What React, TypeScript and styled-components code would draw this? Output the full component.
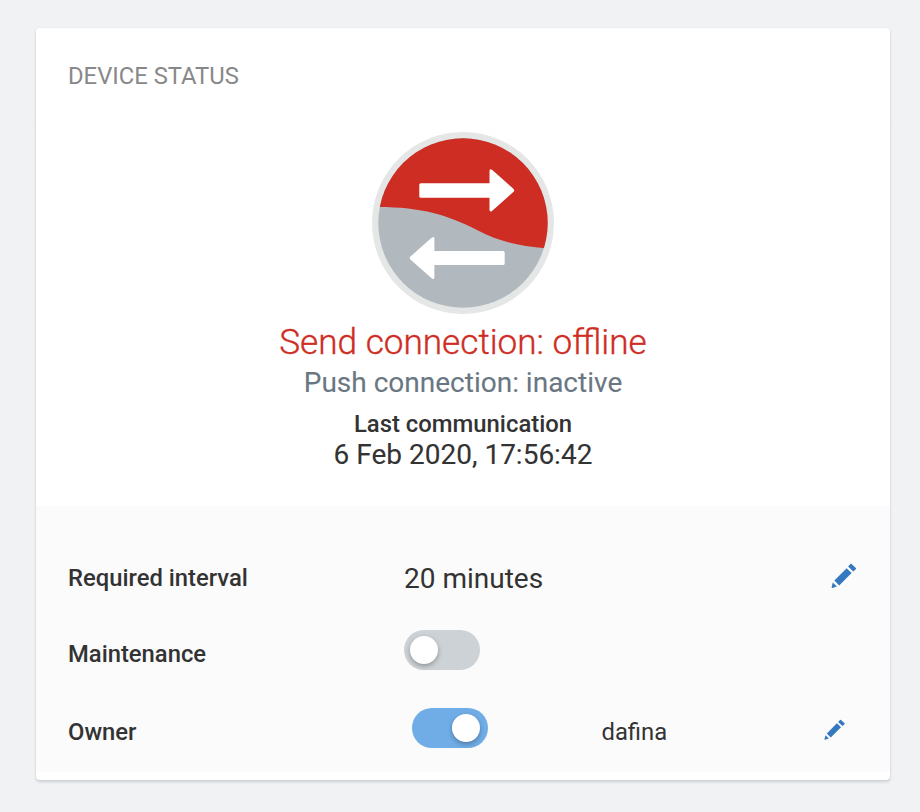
import React from "react";
import styled, { createGlobalStyle } from "styled-components";

const GlobalStyle = createGlobalStyle`
  * { box-sizing: border-box; }
  body {
    margin: 0;
    background: #f0f2f4;
    color: #333;
    font-family: Roboto, "Liberation Sans", sans-serif;
  }
`;

const Page = styled.main`
  height: 812px;
  padding: 28px 30px 32px 36px;
`;

const Card = styled.section`
  height: 752px;
  background: #fff;
  border-radius: 4px;
  box-shadow: 0 2px 3px rgba(40, 50, 60, 0.17), 0 0 2px rgba(40, 50, 60, 0.07);
`;

const CardHeader = styled.header`
  height: 104px;
  display: flex;
  flex-direction: column;
  justify-content: space-between;
  padding-top: 32px;
`;

const Title = styled.h1`
  margin: 0 32px;
  font-size: 23.8px;
  font-weight: 400;
  line-height: 32px;
  color: #888;
`;

const HeaderEdge = styled.div`
  height: 17px;
  background: #fff;
  box-shadow: 0 0 6px -2px rgba(40, 50, 60, 0.035);
`;

const Summary = styled.div`
  height: 374px;
  display: flex;
  flex-direction: column;
  align-items: center;
`;

const StatusIcon = styled.svg`
  display: block;
  flex: none;
  width: 182px;
  height: 182px;
`;

const Line = styled.div<{ $size: number; $height: number; $weight?: number; $color?: string; $top?: number; $stroke?: number }>`
  margin-top: ${(p) => p.$top ?? 0}px;
  font-size: ${(p) => p.$size}px;
  line-height: ${(p) => p.$height}px;
  font-weight: ${(p) => p.$weight ?? 400};
  color: ${(p) => p.$color ?? "#333"};
  -webkit-text-stroke: ${(p) => p.$stroke ?? 0}px currentColor;
  white-space: nowrap;
`;

const Settings = styled.div`
  height: 266px;
  padding: 34px 32px 0;
  background: #fbfbfb;
`;

const Row = styled.div<{ $height: number }>`
  display: grid;
  grid-template-columns: 336px 197.5px 1fr auto;
  align-items: center;
  height: ${(p) => p.$height}px;
`;

const Label = styled.span`
  font-size: 23.8px;
  line-height: 32px;
  font-weight: 500;
`;

const Value = styled.span<{ $size: number; $top?: number }>`
  padding-top: ${(p) => p.$top ?? 0}px;
  font-size: ${(p) => p.$size}px;
  line-height: 32px;
  white-space: nowrap;
`;

const Track = styled.button<{ $on?: boolean }>`
  display: flex;
  align-items: center;
  justify-content: ${(p) => (p.$on ? "flex-end" : "flex-start")};
  width: 76px;
  height: 40px;
  margin: 0 0 8px ${(p) => (p.$on ? 8 : 0)}px;
  padding: 0 ${(p) => (p.$on ? 8 : 6)}px;
  border: 0;
  border-radius: 20px;
  background: ${(p) => (p.$on ? "#70ade7" : "#cdd2d6")};
`;

const Thumb = styled.span`
  width: 28px;
  height: 28px;
  border-radius: 50%;
  background: #fff;
  box-shadow: 0 2px 5px rgba(0, 0, 0, 0.3);
`;

const EditButton = styled.button<{ $inset: number }>`
  display: block;
  grid-column: 4;
  margin: 0 ${(p) => p.$inset}px 4px 0;
  padding: 0;
  border: 0;
  background: none;
  color: #3478bf;
`;

const PencilSvg = styled.svg`
  display: block;
`;

function Pencil({ size }: { size: number }) {
  return (
    <PencilSvg width={size} height={size} viewBox="0 0 26 26" fill="currentColor">
      <path d="M3.4 17.5 15.6 5.2 20.6 10.1 8.2 22.4Z" />
      <path d="M17.1 3.6 19.4 1.1Q20 .5 20.6 1.1L24.8 5.1Q25.4 5.7 24.8 6.3L22.3 8.5Z" />
      <path d="M1.8 19.6 5.9 23.6 1.3 25Q.5 25.1 .6 24.3Z" />
    </PencilSvg>
  );
}

function ConnectionIcon() {
  return (
    <StatusIcon viewBox="372 132 182 182" aria-hidden="true">
      <defs>
        <clipPath id="disc">
          <circle cx="463" cy="223" r="84.7" />
        </clipPath>
      </defs>
      <circle cx="463" cy="223" r="91" fill="#e4e7e6" />
      <g clipPath="url(#disc)">
        <path d="M372 132H554V314H372Z" fill="#b1b8be" />
        <path d="M372 132H554V248.2H546C518 246 498 241 477 230C447 214.5 420 206.3 372 207Z" fill="#ce2d24" />
      </g>
      <g fill="#fff">
        <path d="M420.8 183.3H489.5V171Q489.5 168.2 492 169.7L513.6 189Q514.8 190.4 513.6 191.8L492 211.1Q489.5 212.6 489.5 209.8V197.7H420.8Q419.3 197.7 419.3 196.2V184.8Q419.3 183.3 420.8 183.3Z" />
        <path d="M503 250.9H434.4V238.7Q434.4 235.9 431.9 237.4L410.4 256.6Q409 258 410.4 259.4L431.9 278.6Q434.4 280.1 434.4 277.3V265.1H503Q504.7 265.1 504.7 263.6V252.4Q504.7 250.9 503 250.9Z" />
      </g>
    </StatusIcon>
  );
}

export default function App() {
  return (
    <>
      <GlobalStyle />
      <Page>
        <Card>
          <CardHeader>
            <Title>DEVICE STATUS</Title>
            <HeaderEdge />
          </CardHeader>
          <Summary>
            <ConnectionIcon />
            <Line $size={35.15} $height={40} $weight={300} $color="#ce2d24" $top={8} $stroke={0.35}>Send connection: offline</Line>
            <Line $size={28} $height={32} $color="#697783" $top={5} $stroke={0.1}>Push connection: inactive</Line>
            <Line $size={23.85} $height={28} $weight={500} $top={11}>Last communication</Line>
            <Line $size={28} $height={32} $top={1} $stroke={0.1}>6 Feb 2020, 17:56:42</Line>
          </Summary>
          <Settings>
            <Row $height={76}>
              <Label>Required interval</Label>
              <Value $size={28} $top={2}>20 minutes</Value>
              <EditButton $inset={1} aria-label="Edit required interval"><Pencil size={26} /></EditButton>
            </Row>
            <Row $height={76}>
              <Label>Maintenance</Label>
              <Track role="switch" aria-checked="false" aria-label="Maintenance"><Thumb /></Track>
            </Row>
            <Row $height={80}>
              <Label>Owner</Label>
              <Track $on role="switch" aria-checked="true" aria-label="Owner"><Thumb /></Track>
              <Value $size={23.8}>dafina</Value>
              <EditButton $inset={13} aria-label="Edit owner"><Pencil size={21.5} /></EditButton>
            </Row>
          </Settings>
        </Card>
      </Page>
    </>
  );
}
